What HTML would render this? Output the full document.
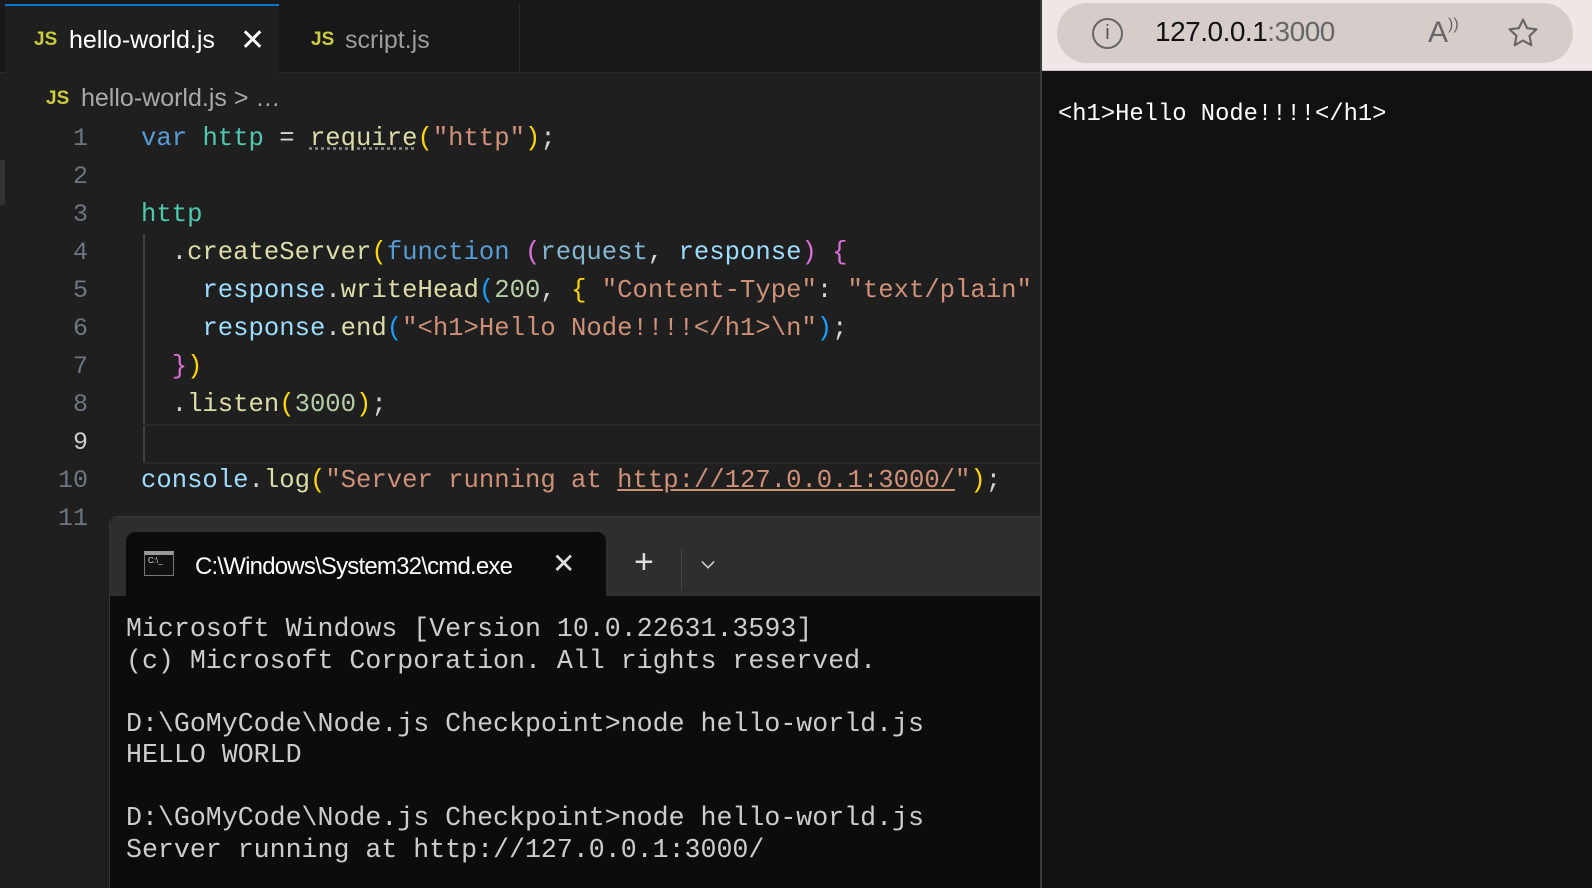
<!DOCTYPE html>
<html><head><meta charset="utf-8"><style>
*{margin:0;padding:0;box-sizing:border-box}
body{width:1592px;height:888px;background:#1f1f1f;position:relative;overflow:hidden;font-family:"Liberation Sans",sans-serif}
.a{position:absolute;white-space:pre}
.mono{font-family:"Liberation Mono",monospace}
.code{font-size:25.6px;line-height:38px}
.ln{color:#6e7681;width:60px;text-align:right;left:28px;font-size:25px}
.k{color:#569cd6}.v{color:#4ec9b0}.f{color:#dcdcaa}.s{color:#ce9178}.y{color:#ffd700}.p{color:#da70d6}.b{color:#179fff}.w{color:#d4d4d4}.l{color:#9cdcfe}.n{color:#b5cea8}.pr{color:#9cdcfe;opacity:.8}
.js{color:#cbcb41;font-weight:bold;font-size:19px}
.term{font-size:26.6px;line-height:31.5px;color:#cccccc}
</style></head><body>
<div class="a" style="left:0;top:0;width:1040px;height:73px;background:#181818;border-bottom:1px solid #2b2b2b"></div>
<div class="a" style="left:5px;top:4px;width:274px;height:70px;background:#1f1f1f;border-top:2px solid #0078d4"></div>
<div class="a" style="left:279px;top:4px;width:241px;height:69px;border-right:1px solid #2b2b2b"></div>
<div class="a js" style="left:34px;top:29px">JS</div>
<div class="a" style="left:69px;top:26px;font-size:25px;color:#fff">hello-world.js</div>
<div class="a" style="left:240px;top:23px;font-size:30px;color:#fff">✕</div>
<div class="a js" style="left:311px;top:29px">JS</div>
<div class="a" style="left:345px;top:26px;font-size:25px;color:#9d9d9d">script.js</div>
<div class="a js" style="left:46px;top:88px">JS</div>
<div class="a" style="left:81px;top:84px;font-size:25px;color:#a9a9a9">hello-world.js &gt; …</div>
<div class="a" style="left:0;top:160px;width:5px;height:45px;background:#333"></div>
<div class="a mono code ln" style="top:120px">1
2
3
4
5
6
7
8
<span style="color:#ccc">9</span>
10
11</div>
<div class="a" style="left:143px;top:234px;width:2px;height:230px;background:#404040"></div>
<div class="a" style="left:143px;top:424px;width:900px;height:40px;border-top:2px solid #282828;border-bottom:2px solid #282828"></div>
<div class="a mono code" style="left:141px;top:120px"><span class="k">var</span> <span class="v">http</span> <span class="w">=</span> <span class="f" style="text-decoration:underline dotted #888">require</span><span class="y">(</span><span class="s">"http"</span><span class="y">)</span><span class="w">;</span>

<span class="v">http</span>
  <span class="w">.</span><span class="f">createServer</span><span class="y">(</span><span class="k">function</span> <span class="p">(</span><span class="pr">request</span><span class="w">,</span> <span class="l">response</span><span class="p">)</span> <span class="p">{</span>
    <span class="l">response</span><span class="w">.</span><span class="f">writeHead</span><span class="b">(</span><span class="n">200</span><span class="w">,</span> <span class="y">{</span> <span class="s">"Content-Type"</span><span class="w">:</span> <span class="s">"text/plain"</span>
    <span class="l">response</span><span class="w">.</span><span class="f">end</span><span class="b">(</span><span class="s">"&lt;h1&gt;Hello Node!!!!&lt;/h1&gt;\n"</span><span class="b">)</span><span class="w">;</span>
  <span class="p">}</span><span class="y">)</span>
  <span class="w">.</span><span class="f">listen</span><span class="y">(</span><span class="n">3000</span><span class="y">)</span><span class="w">;</span>

<span class="l">console</span><span class="w">.</span><span class="f">log</span><span class="y">(</span><span class="s">"Server running at <u>http://127.0.0.1:3000/</u>"</span><span class="y">)</span><span class="w">;</span></div>
<div class="a" style="left:109px;top:516px;width:931px;height:372px;background:#0c0c0c;border-left:1px solid #333;border-top:1px solid #3a3a3a;border-radius:8px 0 0 0"></div>
<div class="a" style="left:110px;top:517px;width:930px;height:79px;background:#2e2e2e;border-radius:8px 0 0 0"></div>
<div class="a" style="left:126px;top:532px;width:480px;height:66px;background:#0c0c0c;border-radius:9px 9px 0 0"></div>
<div class="a" style="left:144px;top:551px;width:30px;height:25px;background:#111;border:1px solid #777;border-top:4px solid #9a9a9a"></div>
<div class="a" style="left:148px;top:556px;font-size:8px;color:#ddd">C:\_</div>
<div class="a" style="left:195px;top:553px;font-size:24px;color:#fff;letter-spacing:-0.8px;width:330px;overflow:hidden">C:\Windows\System32\cmd.exe</div>
<div class="a" style="left:552px;top:547px;font-size:28px;color:#ddd">✕</div>
<div class="a" style="left:634px;top:543px;font-size:34px;color:#ddd;font-weight:300">+</div>
<div class="a" style="left:681px;top:550px;width:1px;height:40px;background:#444"></div>
<div class="a" style="left:702px;top:556px;width:12px;height:12px;border-right:2px solid #ccc;border-bottom:2px solid #ccc;transform:rotate(45deg) scale(0.8)"></div>
<div class="a mono term" style="left:126px;top:614px">Microsoft Windows [Version 10.0.22631.3593]
(c) Microsoft Corporation. All rights reserved.

D:\GoMyCode\Node.js Checkpoint&gt;node hello-world.js
HELLO WORLD

D:\GoMyCode\Node.js Checkpoint&gt;node hello-world.js
Server running at http://127.0.0.1:3000/</div>
<div class="a" style="left:1040px;top:0;width:552px;height:888px;background:#111;border-left:2px solid #3a3a3a"></div>
<div class="a" style="left:1042px;top:0;width:550px;height:71px;background:#efe7e5;border-bottom:1px solid #c8c0be"></div>
<div class="a" style="left:1057px;top:3px;width:516px;height:60px;background:#d6cdca;border-radius:30px"></div>
<div class="a" style="left:1092px;top:18px;width:31px;height:31px;border:2px solid #666;border-radius:50%;font-size:20px;color:#555;text-align:center;line-height:27px">i</div>
<div class="a" style="left:1155px;top:16px;font-size:28px;color:#111;letter-spacing:-0.5px">127.0.0.1<span style="color:#666">:3000</span></div>
<div class="a" style="left:1428px;top:16px;font-size:30px;color:#666">A<span style="font-size:16px;vertical-align:top">))</span></div>
<svg class="a" style="left:1506px;top:16px" width="34" height="34" viewBox="0 0 24 24"><path d="M12 2.5l2.9 6.1 6.6.8-4.9 4.6 1.3 6.6L12 17.3l-5.9 3.3 1.3-6.6-4.9-4.6 6.6-.8z" fill="none" stroke="#666" stroke-width="1.5" stroke-linejoin="round"/></svg>
<div class="a mono" style="left:1058px;top:101px;font-size:23.8px;color:#fff">&lt;h1&gt;Hello Node!!!!&lt;/h1&gt;</div>
</body></html>
